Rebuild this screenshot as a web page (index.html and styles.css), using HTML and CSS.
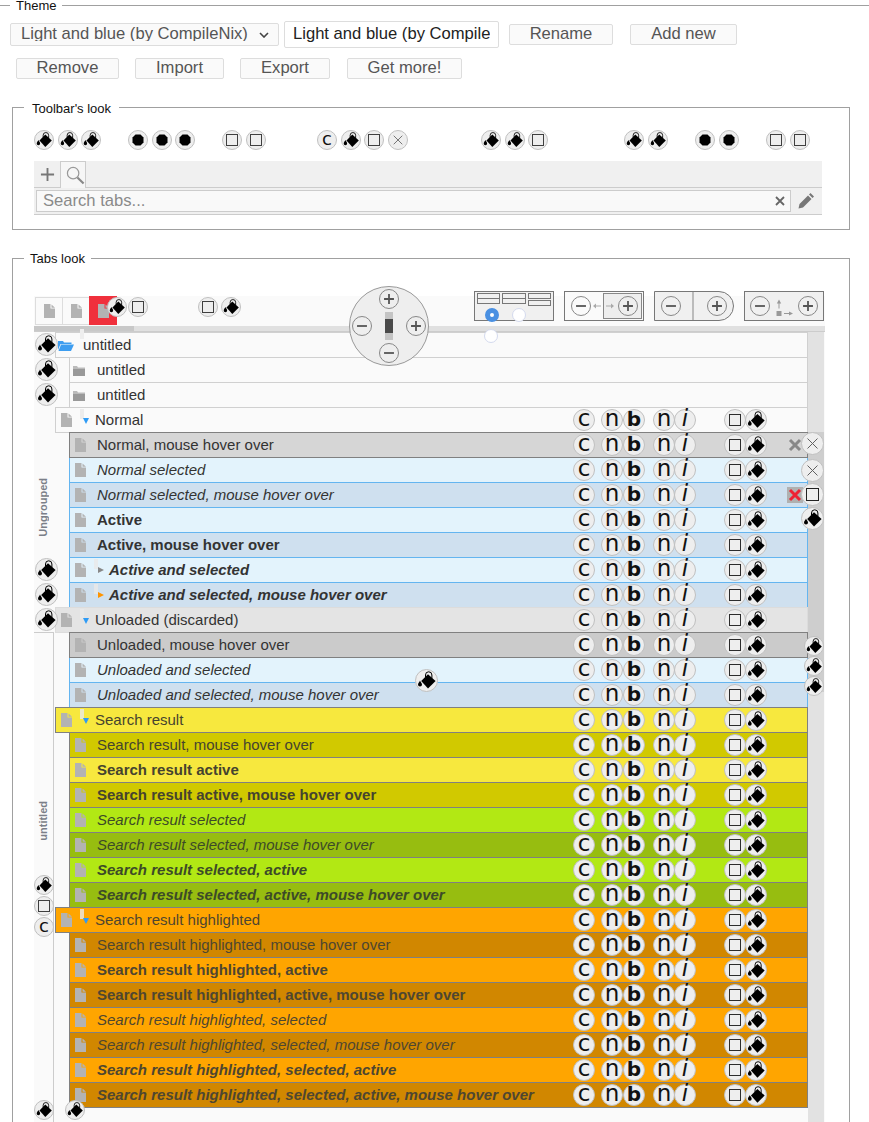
FILE: index.html
```html
<!DOCTYPE html>
<html lang="en">

<head>
    <meta charset="UTF-8">
    <title>Theme</title>
    <link rel="stylesheet" href="styles.css">
</head>

<body>
    <svg class="sprite">
        <symbol id="i-bucket" viewBox="1 1 21 21">
            <path d="M6.200 12 13 5.200 20.600 12 13 19.600Z" />
            <path d="M10.500 8.500V6a3.200 3.200 0 0 1 6.400 0V9.500" fill="none" stroke="#000" />
            <path d="M5 11.500c-.3 1.300-2 2.400-2 4a2 2 0 0 0 4 0c0-1.600-1.700-2.700-2-4Z" />
        </symbol>
        <symbol id="i-hex" viewBox="1 1 18 18">
            <path d="M7.500 4.500h5L15.500 7.500v5L12.500 15.500h-5L4.500 12.500v-5Z" />
        </symbol>
        <symbol id="i-square" viewBox="1 1 21 21">
            <rect x="5.500" y="5.500" width="12" height="12" fill="none" stroke="#222" shape-rendering="crispEdges" />
        </symbol>
        <symbol id="i-x" viewBox="1 1 21 21">
            <path d="M6.500 6.500l10 10M16.500 6.500l-10 10" fill="none" stroke="#333" />
        </symbol>
        <symbol id="i-plus" viewBox="0 0 20 20">
            <path d="M4.500 10h11M10 4.500v11" fill="none" stroke="#555" stroke-width="2" />
        </symbol>
        <symbol id="i-minus" viewBox="0 0 20 20">
            <path d="M4.500 10h11" fill="none" stroke="#555" stroke-width="2" />
        </symbol>
        <symbol id="i-doc" viewBox="0 0 11 14">
            <path d="M0 0h6.500v4.500H11V14H0Z" fill="#b3b3b3" />
            <path d="M7.500.5 11 3.700H7.500Z" fill="#b3b3b3" />
        </symbol>
        <symbol id="i-folder" viewBox="0 0 12 11">
            <path d="M0 1h4l1 1.500h7V4H0Z" fill="#bbb" />
            <path d="M0 4h12v7H0Z" fill="#999" />
        </symbol>
        <symbol id="i-folder-open" viewBox="0 0 16 11">
            <path d="M0 1h5l1 1.500h7.500V4H2.500L0 10Z" fill="#3d9df0" />
            <path d="M3 4.500h13L13 11H.5Z" fill="#3d9df0" />
        </symbol>
    </svg>

    <fieldset class="box box-theme">
        <legend>Theme</legend>
        <div class="d-flex algin-items theme-row">
            <div class="select-wrap">
                <select class="theme-select">
                    <option>Light and blue (by CompileNix)</option>
                </select>
                <svg class="chevron" viewBox="0 0 10 6"><path d="M1 1l4 4 4-4" fill="none" stroke="#444" stroke-width="1.600" /></svg>
            </div>
            <input class="theme-name" type="text" value="Light and blue (by CompileNix)">
            <button class="btn btn-rename">Rename</button>
            <button class="btn btn-add">Add new</button>
        </div>
        <div class="d-flex theme-row-2">
            <button class="btn btn-remove">Remove</button>
            <button class="btn btn-import">Import</button>
            <button class="btn btn-export">Export</button>
            <button class="btn btn-more">Get more!</button>
        </div>

        <fieldset class="box box-toolbar">
            <legend>Toolbar's look</legend>
            <div class="toolbar-picks">
                <div class="pick-group">
                    <span class="cb"><svg><use href="#i-bucket" /></svg></span>
                    <span class="cb"><svg><use href="#i-bucket" /></svg></span>
                    <span class="cb"><svg><use href="#i-bucket" /></svg></span>
                </div>
                <div class="pick-group">
                    <span class="cb"><svg><use href="#i-hex" /></svg></span>
                    <span class="cb"><svg><use href="#i-hex" /></svg></span>
                    <span class="cb"><svg><use href="#i-hex" /></svg></span>
                </div>
                <div class="pick-group">
                    <span class="cb"><svg><use href="#i-square" /></svg></span>
                    <span class="cb"><svg><use href="#i-square" /></svg></span>
                </div>
                <div class="pick-group">
                    <span class="cb cb-text">c</span>
                    <span class="cb"><svg><use href="#i-bucket" /></svg></span>
                    <span class="cb"><svg><use href="#i-square" /></svg></span>
                    <span class="cb cb-thin"><svg><use href="#i-x" /></svg></span>
                </div>
                <div class="pick-group">
                    <span class="cb"><svg><use href="#i-bucket" /></svg></span>
                    <span class="cb"><svg><use href="#i-bucket" /></svg></span>
                    <span class="cb"><svg><use href="#i-square" /></svg></span>
                </div>
                <div class="pick-group">
                    <span class="cb"><svg><use href="#i-bucket" /></svg></span>
                    <span class="cb"><svg><use href="#i-bucket" /></svg></span>
                </div>
                <div class="pick-group">
                    <span class="cb"><svg><use href="#i-hex" /></svg></span>
                    <span class="cb"><svg><use href="#i-hex" /></svg></span>
                </div>
                <div class="pick-group">
                    <span class="cb"><svg><use href="#i-square" /></svg></span>
                    <span class="cb"><svg><use href="#i-square" /></svg></span>
                </div>
            </div>

            <div class="toolbar-preview">
                <div class="d-flex preview-tabs">
                    <div class="preview-add">
                        <svg viewBox="0 0 16 16"><path d="M8 1v14M1 8h14" fill="none" stroke="#777" stroke-width="2" /></svg>
                    </div>
                    <div class="preview-search">
                        <svg viewBox="0 0 20 20"><circle cx="7.500" cy="7.500" r="6" fill="none" stroke="#999" stroke-width="1.300" /><path d="M12 12l6.500 6.500" stroke="#888" stroke-width="2.200" /></svg>
                    </div>
                </div>
                <div class="d-flex algin-items preview-bar">
                    <div class="d-flex algin-items search-box">
                        <span class="search-text">Search tabs...</span>
                        <svg class="search-clear" viewBox="0 0 10 10"><path d="M1 1l8 8M9 1l-8 8" fill="none" stroke="#666" stroke-width="1.800" /></svg>
                    </div>
                    <svg class="search-edit" viewBox="0 0 18 18"><path d="M1.500 16.500 2.500 12 11 3.500 14.500 7 6 15.500ZM12 2.500 13.500 1 17 4.500 15.500 6Z" fill="#777" /></svg>
                </div>
            </div>
        </fieldset>

        <fieldset class="box box-tabs">
            <legend>Tabs look</legend>
            <div class="panel">
                <div class="d-flex strip">
                    <div class="strip-tab"><svg class="doc"><use href="#i-doc" /></svg></div>
                    <div class="strip-tab"><svg class="doc"><use href="#i-doc" /></svg></div>
                    <div class="strip-tab strip-tab-red"><svg class="doc"><use href="#i-doc" /></svg></div>
                </div>
                <div class="strip-scroll"><div class="strip-thumb"></div></div>
                <div class="d-flex panel-body">
                    <div class="groups">
                        <div class="group group-first"><span class="group-name">Ungrouped</span></div>
                        <div class="group group-second"><span class="group-name">untitled</span></div>
                    </div>
                    <div id="rows" class="rows"></div>
                    <div class="scroll"><div class="scroll-thumb"></div></div>
                </div>

                <div class="dial">
                    <span class="pm dial-top"><svg><use href="#i-plus" /></svg></span>
                    <span class="pm dial-left"><svg><use href="#i-minus" /></svg></span>
                    <span class="dial-bar"></span>
                    <span class="pm dial-right"><svg><use href="#i-plus" /></svg></span>
                    <span class="pm dial-bottom"><svg><use href="#i-minus" /></svg></span>
                </div>

                <div class="widgets">
                    <div class="widget widget-layout">
                        <div class="mini-cols">
                            <div><span class="mini"></span><span class="mini mini-join"></span></div>
                            <div><span class="mini"></span><span class="mini mini-join"></span></div>
                            <div><span class="mini"></span><span class="mini mini-gap"></span></div>
                        </div>
                        <div class="d-flex radios">
                            <span class="radio radio-on"></span>
                            <span class="radio"></span>
                        </div>
                    </div>
                    <div class="widget widget-width">
                        <span class="pm"><svg><use href="#i-minus" /></svg></span>
                        <svg class="mini-arrow" viewBox="0 0 8 6"><path d="M0 3 3 .5v2h5v1H3v2Z" fill="#aaa" /></svg>
                        <div class="width-right">
                            <svg class="mini-arrow" viewBox="0 0 8 6"><path d="M8 3 5 .5v2H0v1h5v2Z" fill="#aaa" /></svg>
                            <span class="pm"><svg><use href="#i-plus" /></svg></span>
                        </div>
                    </div>
                    <div class="widget widget-round">
                        <div class="round-half"><span class="pm"><svg><use href="#i-minus" /></svg></span></div>
                        <div class="round-half round-half-end"><span class="pm"><svg><use href="#i-plus" /></svg></span></div>
                    </div>
                    <div class="widget widget-gap">
                        <span class="pm"><svg><use href="#i-minus" /></svg></span>
                        <svg class="gap-arrows" viewBox="0 0 20 20"><path d="M5 3.500 2.800 7.500h1.700v5h1v-5h1.700Z" fill="#999" /><rect x="2.500" y="15" width="5" height="5" fill="#999" /><path d="M19 17.500l-4-2V17H10v1h5v1.500Z" fill="#999" /></svg>
                        <span class="pm"><svg><use href="#i-plus" /></svg></span>
                    </div>
                </div>
                <span class="radio radio-alone"></span>

                <div class="float float-bucket-a">
                    <span class="cb cb-lg"><svg><use href="#i-bucket" /></svg></span>
                    <span class="cb cb-lg"><svg><use href="#i-bucket" /></svg></span>
                    <span class="cb cb-lg"><svg><use href="#i-bucket" /></svg></span>
                </div>
                <div class="float float-bucket-b">
                    <span class="cb cb-lg"><svg><use href="#i-bucket" /></svg></span>
                    <span class="cb cb-lg"><svg><use href="#i-bucket" /></svg></span>
                    <span class="cb cb-lg"><svg><use href="#i-bucket" /></svg></span>
                </div>
                <div class="float float-left-mix">
                    <span class="cb"><svg><use href="#i-bucket" /></svg></span>
                    <span class="cb"><svg><use href="#i-square" /></svg></span>
                    <span class="cb cb-text">c</span>
                </div>
                <div class="float float-bottom">
                    <span class="cb"><svg><use href="#i-bucket" /></svg></span>
                    <span class="cb"><svg><use href="#i-bucket" /></svg></span>
                </div>
                <div class="float float-right-mix">
                    <span class="cb cb-lg cb-thin"><svg><use href="#i-x" /></svg></span>
                    <span class="cb cb-lg cb-thin"><svg><use href="#i-x" /></svg></span>
                    <span class="cb cb-lg"><svg><use href="#i-square" /></svg></span>
                    <span class="cb cb-lg"><svg><use href="#i-bucket" /></svg></span>
                </div>
                <div class="float float-right-buckets">
                    <span class="cb"><svg><use href="#i-bucket" /></svg></span>
                    <span class="cb"><svg><use href="#i-bucket" /></svg></span>
                    <span class="cb"><svg><use href="#i-bucket" /></svg></span>
                </div>
                <div class="float float-middle">
                    <span class="cb cb-lg"><svg><use href="#i-bucket" /></svg></span>
                </div>
                <div class="float float-strip-a">
                    <span class="cb"><svg><use href="#i-bucket" /></svg></span>
                    <span class="cb"><svg><use href="#i-square" /></svg></span>
                </div>
                <div class="float float-strip-b">
                    <span class="cb"><svg><use href="#i-square" /></svg></span>
                    <span class="cb"><svg><use href="#i-bucket" /></svg></span>
                </div>
            </div>
        </fieldset>
    </fieldset>

    <script src="script.js"></script>
</body>

</html>
```

FILE: styles.css
```css
html,
body {
    height: 100vh;
    overflow: hidden;
}

body {
    margin: 0;
    font-family: "Liberation Sans", Arial, sans-serif;
    color: #333;
    background-color: white;
}

.sprite {
    display: none;
}

.d-flex {
    display: flex;
}

.algin-items {
    align-items: center;
}

.box {
    margin: 0;
    min-width: 0;
    border: 1px solid #a0a0a0;
    box-sizing: border-box;
}

legend {
    font-size: 13px;
    line-height: 15px;
    color: #111;
    padding: 0 6px;
}

.box-theme {
    width: 873px;
    margin: -2px 0 0 -2px;
    padding: 8px 0 0 11px;
    border-bottom: 0;
}

.theme-row {
    height: 27px;
}

.select-wrap {
    position: relative;
}

.theme-select {
    appearance: none;
    width: 269px;
    height: 23px;
    padding: 0 0 4px 10px;
    display: block;
    font: 16.6px "Liberation Sans", Arial, sans-serif;
    color: #555;
    background-color: #fafafa;
    border: 1px solid #ddd;
    border-radius: 2px;
}

.chevron {
    position: absolute;
    left: 249px;
    top: 9px;
    width: 10px;
    height: 6px;
}

.theme-name {
    width: 215px;
    height: 27px;
    margin: 0 10px 0 5px;
    padding: 0 8px 2px;
    box-sizing: border-box;
    font: 16.6px "Liberation Sans", Arial, sans-serif;
    color: #222;
    background-color: white;
    border: 1px solid #ddd;
    border-radius: 2px;
}

.btn {
    height: 21px;
    padding: 0;
    display: flex;
    align-items: flex-start;
    justify-content: center;
    font: 16.6px/17px "Liberation Sans", Arial, sans-serif;
    color: #555;
    background-color: #fafafa;
    border: 1px solid #ddd;
    border-radius: 2px;
}

.btn-rename {
    width: 104px;
    margin-right: 17px;
}

.btn-add {
    width: 107px;
}

.theme-row-2 {
    margin: 10px 0 0 6px;
}

.btn-remove {
    width: 103px;
    margin-right: 16px;
}

.btn-import {
    width: 89px;
    margin-right: 16px;
}

.btn-export {
    width: 90px;
    margin-right: 17px;
}

.btn-more {
    width: 115px;
}

.box-toolbar {
    width: 838px;
    margin: 21px 0 0 2px;
    padding: 15px 0 14px 21px;
}

.box-toolbar legend {
    position: relative;
    top: 1px;
    margin-left: -10px;
    padding: 0 8px;
}

.toolbar-picks {
    display: grid;
    grid-template-columns: 94px 94px 95px 164px 143px 71px 71px auto;
}

.pick-group {
    display: flex;
    gap: 3.5px;
}

.cb {
    width: 20px;
    height: 20px;
    flex: none;
    box-sizing: border-box;
    display: flex;
    align-items: center;
    justify-content: center;
    border: 1px solid #c0c0c0;
    border-radius: 50%;
    background-color: #eee;
    color: #111;
    font-weight: normal;
    font-style: normal;
}

.cb svg {
    width: 100%;
    height: 100%;
    flex: none;
}

.cb-thin svg {
    opacity: 0.75;
}

.cb-text {
    font-family: "DejaVu Sans", sans-serif;
    font-size: 18px;
    line-height: 18px;
    padding-bottom: 2px;
}

.cb-lg {
    width: 23px;
    height: 23px;
}

.toolbar-preview {
    width: 788px;
    margin-top: 11px;
    background-color: #f0f0f0;
}

.preview-tabs {
    height: 27px;
    box-sizing: border-box;
    border-bottom: 1px solid #ccc;
}

.preview-add {
    width: 26px;
    padding: 6px 0 0 6px;
    box-sizing: border-box;
}

.preview-add svg {
    width: 15px;
    height: 15px;
    display: block;
}

.preview-search {
    width: 26px;
    height: 27px;
    padding: 4px 0 0 5px;
    box-sizing: border-box;
    background-color: #f6f6f6;
    border: 1px solid #ccc;
    border-bottom: 0;
}

.preview-search svg {
    width: 19px;
    height: 19px;
    display: block;
}

.preview-bar {
    height: 27px;
    box-sizing: border-box;
    border-bottom: 1px solid #ccc;
}

.search-box {
    width: 755px;
    height: 22px;
    margin-left: 2px;
    box-sizing: border-box;
    padding: 0 5px 0 6px;
    justify-content: space-between;
    background-color: #f9f9f9;
    border: 1px solid #ccc;
}

.search-text {
    padding-bottom: 1px;
    font-size: 16.6px;
    color: #8a8a8a;
}

.search-clear {
    width: 10px;
    height: 10px;
}

.search-edit {
    width: 18px;
    height: 18px;
    margin-left: 6px;
}

.box-tabs {
    width: 838px;
    margin: 21px 0 0 2px;
    padding: 30px 0 0 21px;
}

.box-tabs legend {
    margin-left: -10px;
}

.panel {
    position: relative;
    width: 791px;
    height: 840px;
    display: flex;
    flex-direction: column;
    background-color: #fafafa;
}

.strip {
    height: 30px;
    flex: none;
    padding: 1px 0 0 1px;
    box-sizing: border-box;
}

.strip-tab {
    width: 28px;
    height: 28px;
    display: flex;
    align-items: center;
    justify-content: center;
    border: 1px solid #ddd;
    box-sizing: border-box;
    margin-right: -1px;
}

.strip-tab-red {
    height: 29px;
    margin-top: -1px;
    background-color: #f0303c;
    border-color: #f0303c;
}

.doc {
    width: 11px;
    height: 14px;
    flex: none;
}

.strip-scroll {
    height: 6px;
    flex: none;
    background-color: #e0e0e0;
    border-bottom: 1px solid #ccc;
    box-sizing: border-box;
}

.strip-thumb {
    width: 100px;
    height: 5px;
    background-color: #c8c8c8;
}

.panel-body {
    flex-grow: 1;
}

.groups {
    width: 21px;
    flex: none;
    display: flex;
    flex-direction: column;
}

.group {
    box-sizing: border-box;
    display: flex;
}

.group-first {
    height: 300px;
    padding: 146px 0 0 3px;
}

.group-second {
    flex-grow: 1;
    width: 20px;
    padding: 168px 0 0 3px;
    border-top: 1px solid #ccc;
    border-right: 1px solid #ccc;
}

.group-name {
    height: fit-content;
    writing-mode: vertical-rl;
    transform: rotate(180deg);
    font-size: 11px;
    font-weight: bold;
    line-height: 13px;
    color: #7b7f88;
}

.rows {
    width: 753px;
    flex: none;
}

.scroll {
    width: 16px;
    flex: none;
    background-color: #e2e2e2;
}

.scroll-thumb {
    height: 260px;
    margin-top: 100px;
    background-color: #cecece;
}

.row {
    position: relative;
    height: 26px;
    margin-bottom: -1px;
    padding-right: 40px;
    box-sizing: border-box;
    display: flex;
    align-items: center;
    font-size: 15px;
    background-color: #fafafa;
    border: 1px solid #d0d0d0;
}

.lvl0 {
    padding-left: 5px;
}

.lvl1 {
    margin-left: 14px;
    padding-left: 5px;
}

.row-title {
    flex-grow: 1;
    position: relative;
    padding-bottom: 2px;
    white-space: nowrap;
}

.lvl1 .row-title {
    margin-left: 11px;
}

.twisty {
    position: relative;
    width: 23px;
    height: 24px;
    flex: none;
}

.twisty::before {
    content: "";
    position: absolute;
    left: 8px;
    top: 1px;
    width: 4px;
    height: 10px;
    background-color: rgba(232, 232, 232, 0.8);
}

.twisty::after {
    content: "";
    position: absolute;
    left: 11px;
    top: 10px;
    border-left: 3px solid transparent;
    border-right: 3px solid transparent;
    border-top: 6px solid #2e9bf5;
}

.lvl1 .twisty {
    width: 15px;
    margin-left: 8px;
}

.lvl1 .twisty + .row-title {
    margin-left: 0;
}

.lvl1 .twisty::before {
    left: 0;
}

.lvl1 .twisty::after {
    left: 4px;
    top: 9px;
    border-top: 3px solid transparent;
    border-bottom: 3px solid transparent;
    border-left: 6px solid #888;
    border-right: 0;
}

.lvl1 .twisty-orange::after {
    border-left-color: #ff9400;
}

.row-folder-open {
    padding-left: 2px;
}

.row-folder-open .row-title {
    margin-left: 9px;
}

.row-folder-open .row-title::before {
    content: "";
    position: absolute;
    left: -3px;
    top: -7px;
    width: 4px;
    height: 10px;
    background-color: #eee;
}

.row-folder {
    padding-left: 3px;
}

.row-folder .row-title {
    margin-left: 12px;
}

.folder {
    width: 12px;
    height: 11px;
    flex: none;
}

.folder-open {
    width: 16px;
    height: 11px;
    flex: none;
}

.bold {
    font-weight: bold;
}

.italic {
    font-style: italic;
}

.row-btns {
    display: flex;
    flex: none;
}

.row-btns .cb {
    width: 22px;
    height: 22px;
}

.row-btns .cb-text {
    font-size: 23px;
    line-height: 23px;
    padding-bottom: 3px;
}

.row-btns .cb-bold {
    font-size: 20px;
    font-weight: bold;
    padding-bottom: 1px;
}

.row-btns .cb-italic {
    font-style: italic;
}

.gap-n {
    margin-left: 6px;
}

.gap-n2 {
    margin-left: 8px;
}

.gap-sq {
    margin-left: 28px;
}

.join {
    margin-left: -1px;
}

.row-close {
    width: 16px;
    height: 16px;
    flex: none;
    margin: 0 -36px 0 20px;
}

.close-red {
    background-color: #b0b0b0;
}

.hover {
    z-index: 1;
}

.row-hover {
    background-color: #d6d6d6;
    border-color: #808080;
}

.row-sel {
    background-color: #e3f3fc;
    border-color: #64b5f0;
}

.row-sel-hover {
    background-color: #cfe0ef;
    border-color: #64b5f0;
}

.row-unloaded {
    background-color: #e4e4e4;
    border-color: #dcdcdc;
}

.row-unloaded-hover {
    background-color: #cbcbcb;
    border-color: #808080;
}

.row-sr {
    background-color: #f7e83e;
    border-color: #808080;
    color: #45432f;
}

.row-sr-hover {
    background-color: #d1c900;
    border-color: #808080;
    color: #45432f;
}

.row-srs {
    background-color: #b2e814;
    border-color: #808080;
    color: #3c4a28;
}

.row-srs-hover {
    background-color: #97bd10;
    border-color: #808080;
    color: #3c4a28;
}

.row-hl {
    background-color: #ffa500;
    border-color: #808080;
    color: #4e4630;
}

.row-hl-hover {
    background-color: #d18700;
    border-color: #808080;
    color: #4e4630;
}

.dial {
    position: absolute;
    left: 315px;
    top: -10px;
    width: 80px;
    height: 80px;
    box-sizing: border-box;
    display: grid;
    grid-template-columns: repeat(3, 20px);
    grid-template-rows: repeat(3, 20px);
    gap: 7px;
    place-content: center;
    z-index: 2;
    background-color: #eee;
    border: 1px solid #999;
    border-radius: 50%;
}

.pm {
    width: 20px;
    height: 20px;
    flex: none;
    box-sizing: border-box;
    display: block;
    border: 1px solid #888;
    border-radius: 50%;
}

.pm svg {
    width: 100%;
    height: 100%;
    display: block;
}

.dial-top {
    grid-column: 2;
    grid-row: 1;
}

.dial-left {
    grid-column: 1;
    grid-row: 2;
}

.dial-right {
    grid-column: 3;
    grid-row: 2;
}

.dial-bottom {
    grid-column: 2;
    grid-row: 3;
}

.dial-bar {
    grid-column: 2;
    grid-row: 2;
    width: 8px;
    height: 28px;
    margin: -4px 0 0 6px;
    background: linear-gradient(#c4c4c4 25%, #4a4a4a 25%, #4a4a4a 75%, #c4c4c4 75%);
}

.widgets {
    position: absolute;
    right: 1px;
    top: -5px;
    display: flex;
    gap: 10px;
    z-index: 2;
}

.widget {
    width: 80px;
    height: 30px;
    box-sizing: border-box;
    display: flex;
    align-items: center;
    background-color: #f0f0f0;
    border: 1px solid #777;
}

.widget-layout {
    display: block;
    padding: 1px 2px;
}

.mini-cols {
    display: flex;
    gap: 2px;
}

.mini-cols > div {
    flex: 1;
}

.mini {
    display: block;
    height: 6px;
    box-sizing: border-box;
    border: 1px solid #777;
}

.mini-join {
    margin-top: -1px;
}

.mini-gap {
    margin-top: 1px;
}

.radios {
    margin: 2px 0 0 8px;
    gap: 13px;
}

.radio {
    width: 14px;
    height: 14px;
    flex: none;
    box-sizing: border-box;
    display: block;
    background-color: white;
    border: 1px solid #d4daee;
    border-radius: 50%;
}

.radio-on {
    background-color: white;
    border: 5px solid #4a90e2;
}

.radio-alone {
    position: absolute;
    left: 450px;
    top: 33px;
    z-index: 2;
}

.widget-width {
    padding-left: 6px;
    background-color: #fafafa;
}

.mini-arrow {
    width: 8px;
    height: 6px;
    flex: none;
    margin-left: 2px;
}

.width-right {
    width: 39px;
    height: 26px;
    margin-left: auto;
    margin-right: 1px;
    box-sizing: border-box;
    display: flex;
    align-items: center;
    background-color: #eee;
    border: 1px solid #888;
    gap: 4px;
}

.widget-round {
    border-radius: 0 15px 15px 0;
}

.round-half {
    width: 39px;
    height: 100%;
    padding-left: 6px;
    box-sizing: border-box;
    display: flex;
    align-items: center;
    border-right: 2px solid #bbb;
}

.round-half-end {
    border-right: 0;
    padding: 0 6px 0 0;
    justify-content: flex-end;
}

.widget-gap {
    justify-content: space-between;
    padding: 0 5px;
}

.gap-arrows {
    width: 20px;
    height: 20px;
    flex: none;
}

.float {
    position: absolute;
    display: flex;
    flex-direction: column;
    z-index: 3;
}

.float-bucket-a {
    left: 1px;
    top: 37px;
    gap: 2px;
}

.float-bucket-b {
    left: 1px;
    top: 262px;
    gap: 2px;
}

.float-left-mix {
    left: 0;
    top: 579px;
    gap: 1px;
}

.float-bottom {
    left: 0;
    top: 804px;
    flex-direction: row;
    gap: 11px;
}

.float-right-mix {
    left: 767px;
    top: 136px;
    gap: 1px;
}

.float-right-mix .cb:first-child {
    margin-bottom: 3px;
}

.float-right-buckets {
    left: 770px;
    top: 340px;
}

.float-middle {
    left: 381px;
    top: 373px;
}

.float-strip-a {
    left: 73px;
    top: 1px;
    flex-direction: row;
    gap: 1px;
}

.float-strip-b {
    left: 164px;
    top: 1px;
    flex-direction: row;
    gap: 3px;
}
```

FILE: script.js
```js
// rows of the tabs preview
const rows = [
    { title: "untitled", cls: "lvl0 row-folder-open", folder: "open" },
    { title: "untitled", cls: "lvl1 row-folder", folder: "closed" },
    { title: "untitled", cls: "lvl1 row-folder", folder: "closed" },
    { title: "Normal", cls: "lvl0", twisty: true },
    { title: "Normal, mouse hover over", cls: "lvl1 row-hover hover", close: "gray" },
    { title: "Normal selected", cls: "lvl1 row-sel italic" },
    { title: "Normal selected, mouse hover over", cls: "lvl1 row-sel-hover italic", close: "red" },
    { title: "Active", cls: "lvl1 row-sel bold" },
    { title: "Active, mouse hover over", cls: "lvl1 row-sel-hover bold" },
    { title: "Active and selected", cls: "lvl1 row-sel bold italic", twisty: true },
    { title: "Active and selected, mouse hover over", cls: "lvl1 row-sel-hover bold italic", twisty: "orange" },
    { title: "Unloaded (discarded)", cls: "lvl0 row-unloaded", twisty: true },
    { title: "Unloaded, mouse hover over", cls: "lvl1 row-unloaded-hover hover" },
    { title: "Unloaded and selected", cls: "lvl1 row-sel italic" },
    { title: "Unloaded and selected, mouse hover over", cls: "lvl1 row-sel-hover italic" },
    { title: "Search result", cls: "lvl0 row-sr hover", twisty: true },
    { title: "Search result, mouse hover over", cls: "lvl1 row-sr-hover" },
    { title: "Search result active", cls: "lvl1 row-sr bold" },
    { title: "Search result active, mouse hover over", cls: "lvl1 row-sr-hover bold" },
    { title: "Search result selected", cls: "lvl1 row-srs italic" },
    { title: "Search result selected, mouse hover over", cls: "lvl1 row-srs-hover italic" },
    { title: "Search result selected, active", cls: "lvl1 row-srs bold italic" },
    { title: "Search result selected, active, mouse hover over", cls: "lvl1 row-srs-hover bold italic" },
    { title: "Search result highlighted", cls: "lvl0 row-hl hover", twisty: true },
    { title: "Search result highlighted, mouse hover over", cls: "lvl1 row-hl-hover" },
    { title: "Search result highlighted, active", cls: "lvl1 row-hl bold" },
    { title: "Search result highlighted, active, mouse hover over", cls: "lvl1 row-hl-hover bold" },
    { title: "Search result highlighted, selected", cls: "lvl1 row-hl italic" },
    { title: "Search result highlighted, selected, mouse hover over", cls: "lvl1 row-hl-hover italic" },
    { title: "Search result highlighted, selected, active", cls: "lvl1 row-hl bold italic" },
    { title: "Search result highlighted, selected, active, mouse hover over", cls: "lvl1 row-hl-hover bold italic" }
];

const rowButtons =
    '<div class="row-btns">' +
    '<span class="cb cb-text">c</span>' +
    '<span class="cb cb-text gap-n">n</span>' +
    '<span class="cb cb-text cb-bold">b</span>' +
    '<span class="cb cb-text gap-n2">n</span>' +
    '<span class="cb cb-text cb-italic join">i</span>' +
    '<span class="cb gap-sq"><svg><use href="#i-square" /></svg></span>' +
    '<span class="cb join"><svg><use href="#i-bucket" /></svg></span>' +
    '</div>';

function closeIcon(kind) {
    let stroke = kind == "red" ? "#ee2233" : "#888";
    let cls = kind == "red" ? "row-close close-red" : "row-close";
    return '<svg class="' + cls + '" viewBox="0 0 16 16"><path d="M3 3l10 10M13 3 3 13" fill="none" stroke="' + stroke + '" stroke-width="3" /></svg>';
}

function rowHtml(row) {
    let html = "";
    if (row.folder == "open") {
        html += '<svg class="folder-open"><use href="#i-folder-open" /></svg>';
    } else if (row.folder == "closed") {
        html += '<svg class="folder"><use href="#i-folder" /></svg>';
    } else {
        html += '<svg class="doc"><use href="#i-doc" /></svg>';
    }
    if (row.twisty) {
        html += '<span class="twisty' + (row.twisty == "orange" ? " twisty-orange" : "") + '"></span>';
    }
    html += '<span class="row-title">' + row.title + '</span>';
    if (!row.folder) {
        html += rowButtons;
    }
    if (row.close) {
        html += closeIcon(row.close);
    }
    return '<div class="row ' + row.cls + '">' + html + '</div>';
}

document.getElementById("rows").innerHTML = rows.map(rowHtml).join("");
```
